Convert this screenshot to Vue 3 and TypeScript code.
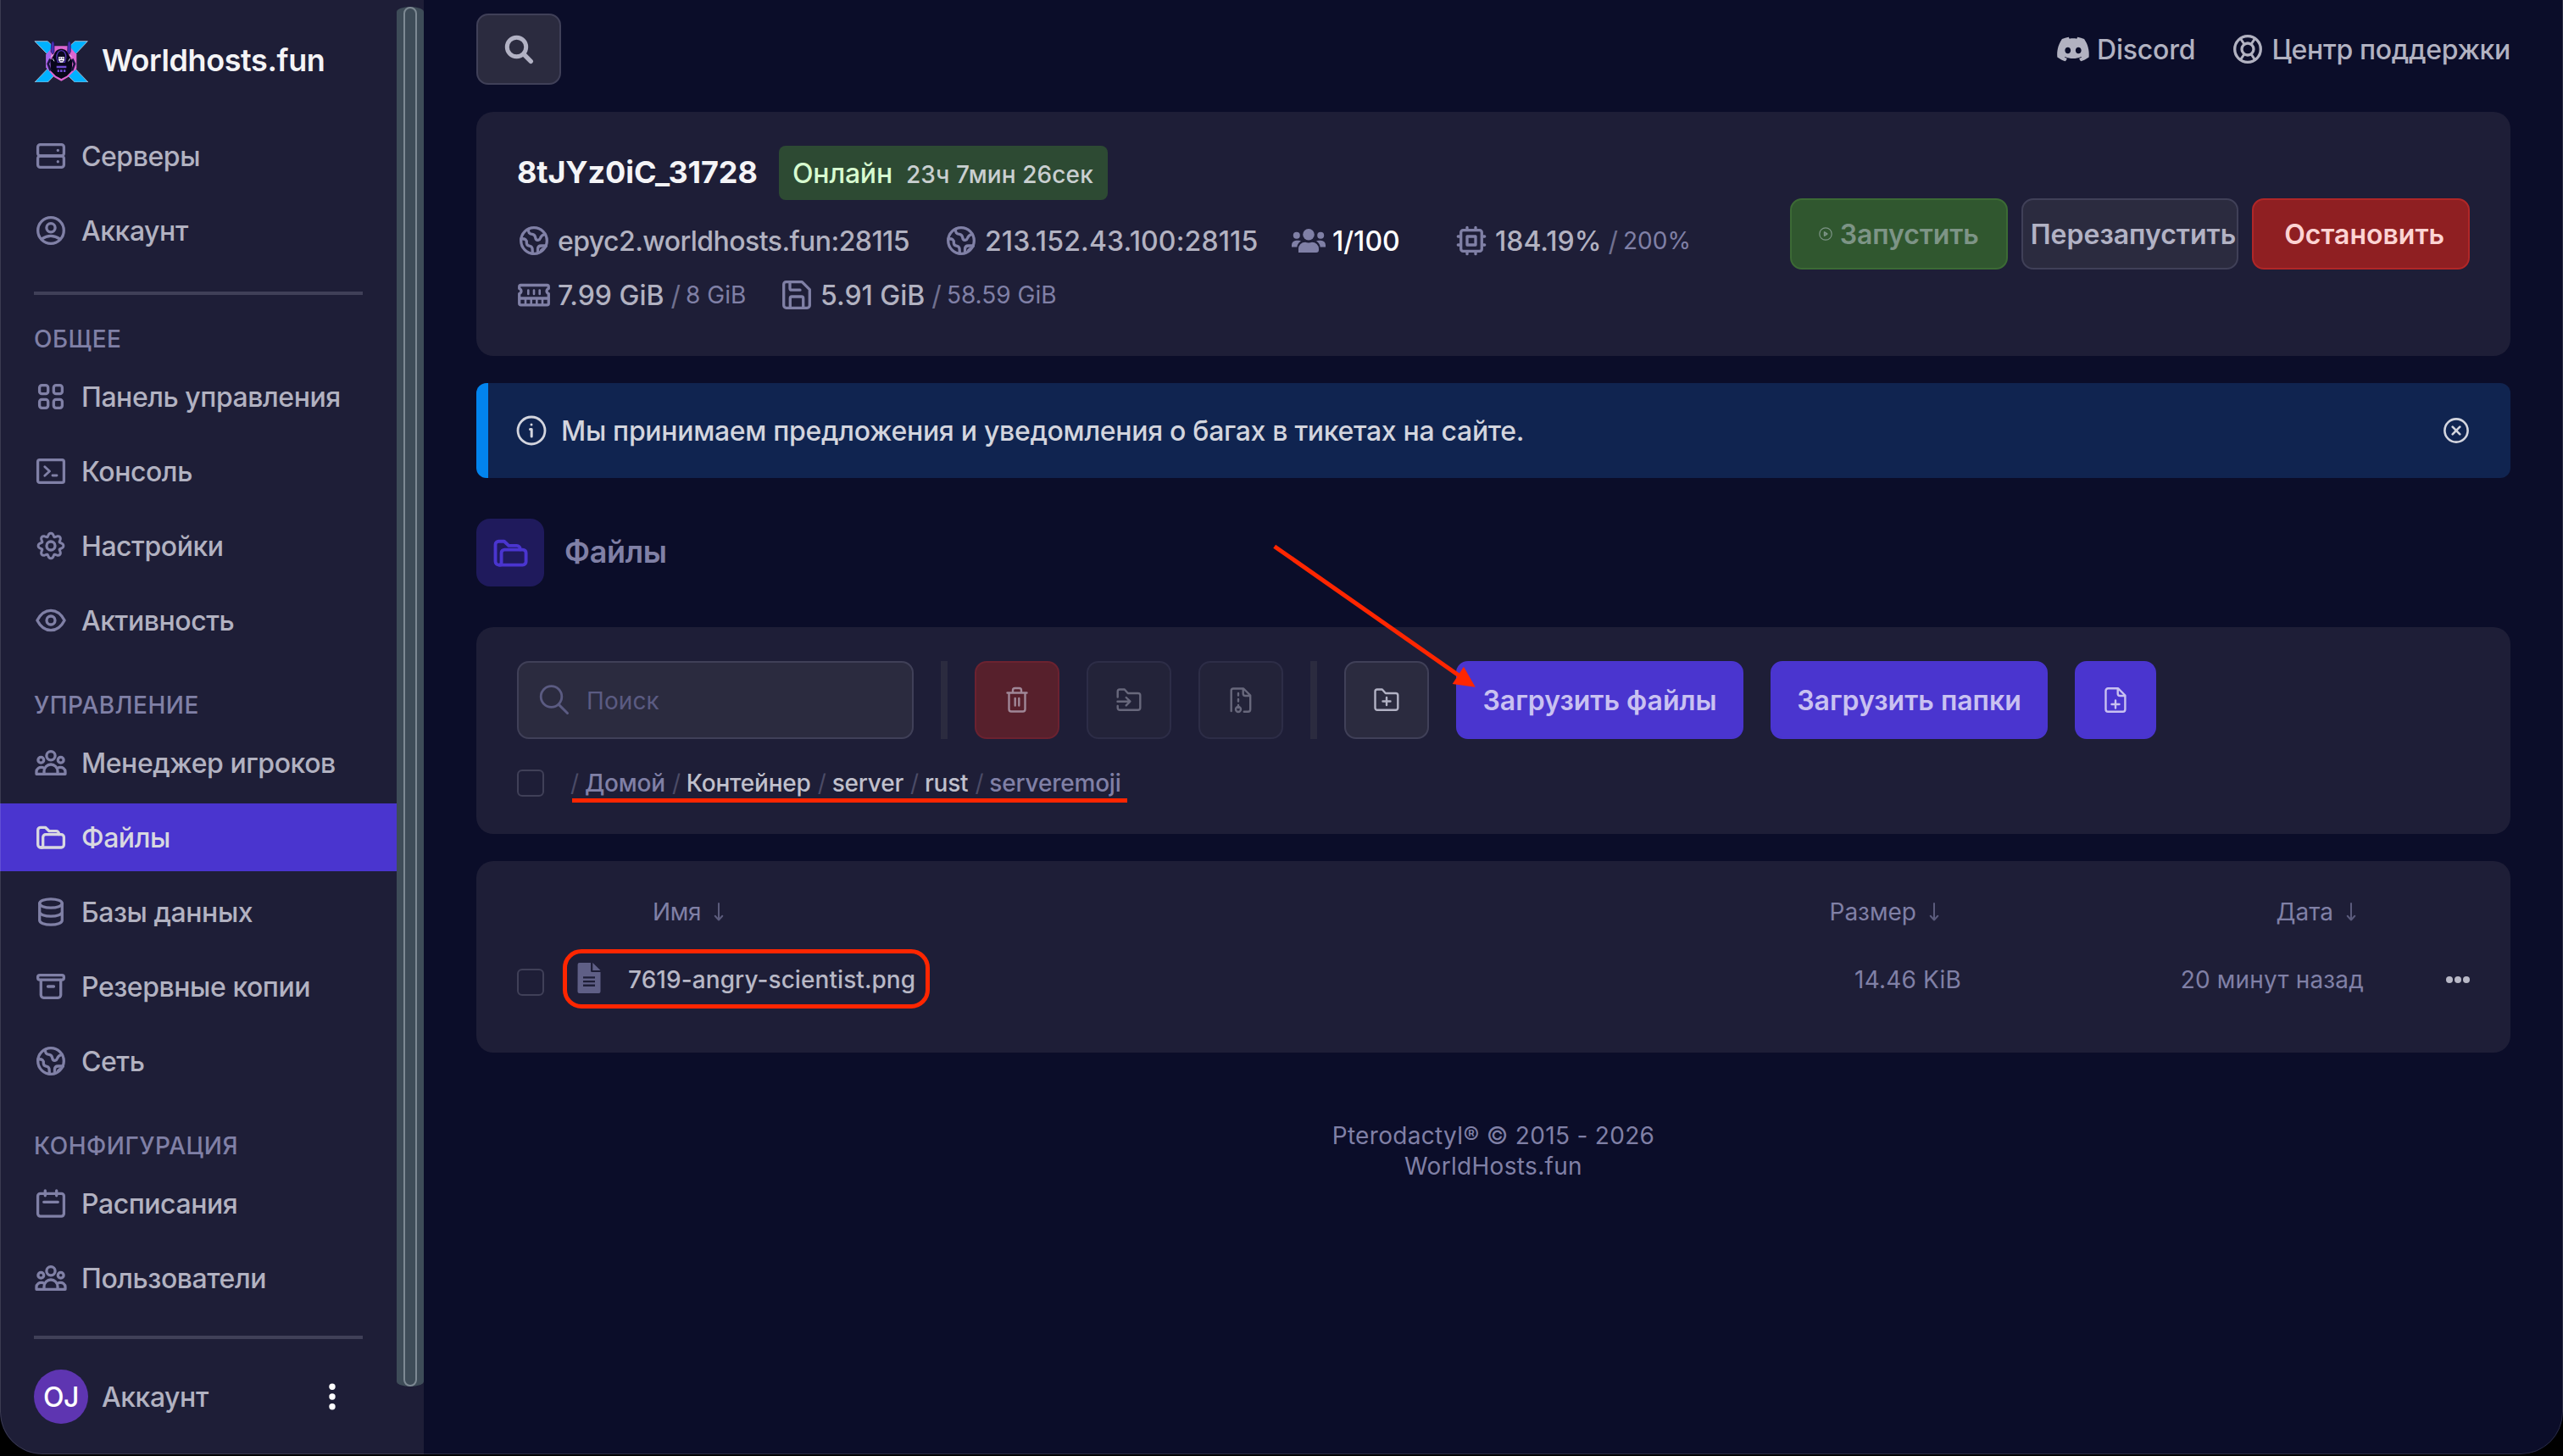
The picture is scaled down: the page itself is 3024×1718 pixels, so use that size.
<script setup lang="ts">
interface NavItem { label: string; icon: string; active?: boolean }
interface NavGroup { title?: string; items: NavItem[] }

const gearPath = (() => {
  const pts: string[] = []
  for (let i = 0; i < 160; i++) {
    const a = (i / 160) * Math.PI * 2
    const c = Math.cos(8 * a)
    const r = 13.2 + 1.9 * c - 0.25 * Math.cos(16 * a)
    pts.push(`${(20 + r * Math.sin(a)).toFixed(2)} ${(20 - r * Math.cos(a)).toFixed(2)}`)
  }
  return `M${pts.join('L')}Z`
})()

const icons: Record<string, string> = {
  server: '<rect x="4.6" y="6.6" width="30.8" height="13.4" rx="3"/><rect x="4.6" y="20" width="30.8" height="13.4" rx="3"/><path d="M28.3 13.3v.1M28.3 26.7v.1"/>',
  account: '<circle cx="20" cy="20" r="15.3"/><circle cx="20" cy="16.7" r="5.1"/><path d="M9 30.2Q19.8 22.500 31 30.2"/>',
  grid: '<rect x="6.6" y="6.6" width="10.1" height="10.1" rx="2.8"/><rect x="23.3" y="6.6" width="10.1" height="10.1" rx="2.8"/><rect x="6.6" y="23.3" width="10.1" height="10.1" rx="2.8"/><rect x="23.3" y="23.3" width="10.1" height="10.1" rx="2.8"/>',
  console: '<rect x="4.6" y="6.6" width="30.8" height="26.8" rx="2.2"/><path stroke-width="2.9" d="M12.8 14.8l5.700 5.2-5.700 5.2M22 25h5"/>',
  gear: `<path stroke-width="3" d="${gearPath}"/><circle cx="20" cy="20" r="5"/>`,
  eye: '<path d="M3.9 20C8 12 13.5 8.3 20 8.3S32 12 36.1 20C32 28 26.500 31.7 20 31.7S8 28 3.9 20z"/><circle cx="20" cy="20" r="5"/>',
  users: '<circle cx="20" cy="11.7" r="5.1"/><circle cx="8.3" cy="16.7" r="3.4"/><circle cx="31.7" cy="16.7" r="3.4"/><path d="M12 33.3v-3.3a8 8 0 0 1 16 0v3.3M10.7 25.7C6 24.5 3 27.5 3 30.5v2.8H37v-2.8C37 27.5 34 24.5 29.3 25.7"/>',
  folder: '<path d="M10 32H8.2a3.5 3.5 0 0 1-3.5-3.5V11.5a3.2 3.2 0 0 1 3.2-3.2h5.6l4.6 4.4h8.2a3.2 3.2 0 0 1 3.2 3.2v.6"/><path d="M8.5 32c1.5 0 2.2-1 2.2-2.5v-9.600a3.2 3.2 0 0 1 3.2-3.2h18.3a3.2 3.2 0 0 1 3.2 3.2v8.9a3.2 3.2 0 0 1-3.2 3.2H8.5z"/>',
  database: '<ellipse cx="20" cy="10" rx="13.3" ry="5.2"/><path d="M6.7 10v20c0 2.9 6 5.2 13.3 5.2s13.3-2.3 13.3-5.2V10M6.7 20c0 2.9 6 5.2 13.3 5.2S33.3 22.9 33.3 20"/>',
  archive: '<rect x="4.6" y="6.6" width="30.8" height="5.6" rx="2.4"/><path d="M8.3 12.5v17.6a3.2 3.2 0 0 0 3.2 3.2h17a3.2 3.2 0 0 0 3.2-3.2V12.5M16.5 20h7"/>',
  globe: '<circle cx="20" cy="20" r="15.3"/><path d="M13.5 6.5c-.4 3.8 1 5.6 4.5 5.8 4.5.2 3 4.5 4.5 6.2 1.5 1.6 4.2.8 5-1.5.6-2 1.5-3.5 5.2-4.5M5 17.8c5-.4 6.5 1.5 6.3 4.5-.2 2.8 1.7 3.7 3.9 4 2.8.5 3.1 2.2 3.1 8.7M34.500 26h-6c-3 0-4 1.5-4 4v4.5M28.5 31.5l2-1.8"/>',
  calendar: '<rect x="4.6" y="8.3" width="30.8" height="26.8" rx="3"/><path d="M13.3 4.8v6M26.7 4.8v6M11.7 18.3h16.6"/>',
  search: '<circle cx="17.5" cy="17.5" r="11.2" stroke-width="5"/><path stroke-width="5.4" d="M26 26l8.3 8.3"/>',
  searchThin: '<circle cx="16.5" cy="16" r="12.3" stroke-width="2.8"/><path stroke-width="3" d="M25.3 25.4L35.5 35.5"/>',
  discord: '<path transform="translate(1.2 1.2) scale(1.566)" fill="currentColor" stroke="none" d="M20.317 4.3698a19.7913 19.7913 0 00-4.8851-1.5152.0741.0741 0 00-.0785.0371c-.211.3753-.4447.8648-.6083 1.2495-1.8447-.2762-3.68-.2762-5.4868 0-.1636-.3933-.4058-.8742-.6177-1.2495a.077.077 0 00-.0785-.037 19.7363 19.7363 0 00-4.8852 1.515.0699.0699 0 00-.0321.0277C.5334 9.0458-.319 13.5799.0992 18.0578a.0824.0824 0 00.0312.0561c2.0528 1.5076 4.0413 2.4228 5.9929 3.0294a.0777.0777 0 00.0842-.0276c.4616-.6304.8731-1.2952 1.226-1.9942a.076.076 0 00-.0416-.1057c-.6528-.2476-1.2743-.5495-1.8722-.8923a.077.077 0 01-.0076-.1277c.1258-.0943.2517-.1923.3718-.2914a.0743.0743 0 01.0776-.0105c3.9278 1.7933 8.18 1.7933 12.0614 0a.0739.0739 0 01.0785.0095c.1202.099.246.1981.3728.2924a.077.077 0 01-.0066.1276 12.2986 12.2986 0 01-1.873.8914.0766.0766 0 00-.0407.1067c.3604.698.7719 1.3628 1.225 1.9932a.076.076 0 00.0842.0286c1.961-.6067 3.9495-1.5219 6.0023-3.0294a.077.077 0 00.0313-.0552c.5004-5.177-.8382-9.6739-3.5485-13.6604a.061.061 0 00-.0312-.0286zM8.02 15.3312c-1.1825 0-2.1569-1.0857-2.1569-2.419 0-1.3332.9555-2.4189 2.157-2.4189 1.2108 0 2.1757 1.0952 2.1568 2.419 0 1.3332-.9555 2.4189-2.1569 2.4189zm7.9748 0c-1.1825 0-2.1569-1.0857-2.1569-2.419 0-1.3332.9554-2.4189 2.1569-2.4189 1.2108 0 2.1757 1.0952 2.1568 2.419 0 1.3332-.946 2.4189-2.1568 2.4189Z"/>',
  lifebuoy: '<circle cx="20" cy="20" r="15.3"/><circle cx="20" cy="20" r="7"/><path d="M11.5 7.5l4 6M28.5 7.5l-4 6M11.5 32.5l4-6M28.5 32.5l-4-6" stroke-width="3"/>',
  usersSolid: '<g fill="currentColor" stroke="none"><circle cx="20" cy="12.8" r="6.8"/><circle cx="5.8" cy="13.8" r="4"/><circle cx="34.2" cy="13.8" r="4"/><path d="M0 27.5v-2.3A5.5 5.5 0 0 1 5.5 19.7h2.7c1 0 2 .3 2.8.8a9.5 9.5 0 0 0-4.700 7zM40 27.5v-2.3a5.5 5.5 0 0 0-5.5-5.5h-2.7c-1 0-2 .3-2.8.8a9.5 9.5 0 0 1 4.700 7zM8 34v-4.3A8 8 0 0 1 16 21.7c2.500 1 5.5 1 8 0a8 8 0 0 1 8 8V31a3 3 0 0 1-3 3z"/></g>',
  cpu: '<rect x="7.7" y="7.7" width="24.6" height="24.6" rx="2.6"/><rect x="15" y="15" width="10" height="10"/><path d="M15 7V4.3M25 7V4.3M15 33v2.7M25 33v2.7M7 15H4.3M7 25H4.3M33 15h2.7M33 25h2.7"/>',
  ram: '<path d="M4.5 8.5h31c1.3 0 1.8.8 1.8 2v2c-3 1-3 5 0 6v11.5c0 1.2-.6 1.8-1.8 1.8h-31c-1.2 0-1.8-.6-1.8-1.8V18.5c3-1 3-5 0-6v-2c0-1.2.5-2 1.8-2zM3 24h34"/><path stroke-width="2.6" d="M13.3 14.5v4.5M20 14.5v4.5M26.7 14.5v4.5M10 25v6M16.7 25v6M23.3 25v6M30 25v6"/>',
  floppy: '<path d="M7.5 4.700h18.8l9 9v18.6a3 3 0 0 1-3 3H7.7a3 3 0 0 1-3-3V7.5a2.8 2.8 0 0 1 2.8-2.8z"/><path d="M12 5v7.2a2 2 0 0 0 2 2h10M12.3 35V24a2 2 0 0 1 2-2h11.4a2 2 0 0 1 2 2v11"/>',
  play: '<circle cx="20" cy="20" r="18" stroke-width="3"/><path stroke-width="4" d="M16.5 14.5v11l8-5.5z"/>',
  info: '<circle cx="20" cy="20" r="16" stroke-width="2.8"/><path stroke-width="3" d="M18.5 18.5h1.7v8.5M20 13v.1"/>',
  close: '<circle cx="20" cy="20" r="13.6" stroke-width="2.6"/><path stroke-width="2.6" d="M15.7 15.7l8.6 8.6M24.3 15.7l-8.6 8.6"/>',
  trash: '<path stroke-width="2.4" d="M8.5 11.5h23M10.5 11.5v19.3a2.700 2.700 0 0 0 2.700 2.700h13.6a2.700 2.700 0 0 0 2.700-2.700V11.5M15 11V8.5A2.5 2.5 0 0 1 17.5 6h5A2.5 2.5 0 0 1 25 8.5V11M17.7 18v8.5M22.3 18v8.5"/>',
  move: '<path stroke-width="2.4" d="M6.7 16.5V10a2.5 2.5 0 0 1 2.5-2.5h5.6l4 4.5h12a2.5 2.5 0 0 1 2.5 2.5v14.8a2.5 2.5 0 0 1-2.5 2.5H9.2a2.5 2.5 0 0 1-2.5-2.5V27M6.5 21.7h14.7M16.7 17l4.7 4.7-4.7 4.7"/>',
  zip: '<path stroke-width="2.4" d="M8.7 33V9a2.5 2.5 0 0 1 2.5-2.5h12l8 8V31a2.7 2.7 0 0 1-2.7 2.7h-4.7M22.7 7v5.5a2.5 2.5 0 0 0 2.5 2.5H31M17 12v2.5M17 19v2.5M17 26v3"/><circle cx="17" cy="31" r="3" stroke-width="2.4"/>',
  folderPlus: '<path stroke-width="2.4" d="M6.5 10A2.5 2.5 0 0 1 9 7.5h5.8l4 4.5h12a2.5 2.5 0 0 1 2.5 2.5v14.8a2.5 2.5 0 0 1-2.5 2.5H9a2.5 2.5 0 0 1-2.5-2.5zM20 17v9M15.5 21.5h9"/>',
  filePlus: '<path stroke-width="2.4" d="M8.5 9A2.7 2.7 0 0 1 11.2 6.3h12l8.2 8.2V31a2.7 2.7 0 0 1-2.7 2.7H11.2A2.7 2.7 0 0 1 8.5 31zM22.7 7v5.5a2.5 2.5 0 0 0 2.5 2.5H31M20 20.5v9M15.5 25h9"/>',
  arrow: '<path stroke-width="2" d="M20 10v19.5M15.7 24.8l4.3 4.7 4.3-4.7"/>',
  file: '<path fill="currentColor" stroke="none" fill-rule="evenodd" d="M6.6 4a2 2 0 0 1 2-2H22v9.5a1.5 1.5 0 0 0 1.5 1.5h10V36a2 2 0 0 1-2 2h-23a2 2 0 0 1-2-2zM13 18.2v2.4h14v-2.4zM13 22.9v2.4h14v-2.4zM13 27.6v2.4h14v-2.4zM24.3 2l9.2 9h-9.2z"/>',
}

const groups: NavGroup[] = [
  { items: [{ label: 'Серверы', icon: 'server' }, { label: 'Аккаунт', icon: 'account' }] },
  {
    title: 'ОБЩЕЕ',
    items: [
      { label: 'Панель управления', icon: 'grid' },
      { label: 'Консоль', icon: 'console' },
      { label: 'Настройки', icon: 'gear' },
      { label: 'Активность', icon: 'eye' },
    ],
  },
  {
    title: 'УПРАВЛЕНИЕ',
    items: [
      { label: 'Менеджер игроков', icon: 'users' },
      { label: 'Файлы', icon: 'folder', active: true },
      { label: 'Базы данных', icon: 'database' },
      { label: 'Резервные копии', icon: 'archive' },
      { label: 'Сеть', icon: 'globe' },
    ],
  },
  {
    title: 'КОНФИГУРАЦИЯ',
    items: [{ label: 'Расписания', icon: 'calendar' }, { label: 'Пользователи', icon: 'users' }],
  },
]

const crumbs = [
  { label: 'Домой', link: false },
  { label: 'Контейнер', link: true },
  { label: 'server', link: true },
  { label: 'rust', link: true },
  { label: 'serveremoji', link: false },
]
</script>

<template>
  <div class="screen">
    <div class="window">
      <aside class="sidebar">
        <div class="side-body">
          <div class="brand">
            <svg class="logo" viewBox="120 140 192 152">
              <path d="M123 145h46l46 46 50-46h45l-68 72 70 73h-47l-50-48-46 48h-46l70-73z" fill="#00b2ff" stroke="#9fb4cc" stroke-width="3" />
              <path d="M190 162h55l26 30v50l-30 30-24 14-25-14-29-34v-46z" fill="#dc66d0" />
              <path d="M163 192l17-16v78l-17-16z" fill="#a565ee" />
              <path d="M192 190c8-24 42-24 50 0l14 26-2 34-18 18-19 10-19-10-18-18-2-34z" fill="#07061a" />
              <path d="M182 152l5-9 5 9v30l-5 10-7-10zM240 152l5-9 5 9v30l-5 10-6-10z" fill="#4b2fb4" stroke="#1c1250" stroke-width="2" />
              <path d="M201 205c-4-36 36-36 32 0l-4 14h-24z" fill="#0a0820" stroke="#5234b4" stroke-width="4" />
              <path d="M207 200h21v12l-6 8h-9l-6-8z" fill="#f0ecf8" />
              <path d="M209 205h7M219 205h7M213 214h9" stroke="#1b1230" stroke-width="2.500" />
              <path d="M200 236h35M203 250h7M213 250h8M225 250h7" stroke="#6f4bd2" stroke-width="8" />
              <path d="M178 208l-8 17 9 24M256 208l8 17-9 24" fill="none" stroke="#1d1440" stroke-width="8" />
              <path d="M186 206l6 10M248 206l-6 10M188 192l-8 9M246 192l8 9" stroke="#d9d2ec" stroke-width="3" />
            </svg>
            <span class="brand-name">Worldhosts.fun</span>
          </div>
          <nav>
            <section v-for="(group, gi) in groups" :key="gi" class="group">
              <h6 v-if="group.title" class="group-title">{{ group.title }}</h6>
              <a v-for="item in group.items" :key="item.label" class="nav-item" :class="{ active: item.active }">
                <svg class="ic" viewBox="0 0 40 40" v-html="icons[item.icon]" />
                <span>{{ item.label }}</span>
              </a>
              <div v-if="gi === 0" class="divider" />
            </section>
          </nav>
          <div class="divider bottom" />
          <div class="user">
            <div class="avatar">OJ</div>
            <span class="user-name">Аккаунт</span>
            <svg class="kebab" viewBox="0 0 8 32"><circle cx="4" cy="4.3" r="3.7" /><circle cx="4" cy="16" r="3.7" /><circle cx="4" cy="27.7" r="3.7" /></svg>
          </div>
        </div>
        <div class="scroll-track"><div class="scroll-thumb" /></div>
      </aside>

      <main class="main">
        <header class="topbar">
          <button class="btn search-btn"><svg class="ic" viewBox="0 0 40 40" v-html="icons.search" /></button>
          <a class="top-link discord"><svg class="ic" viewBox="0 0 40 40" v-html="icons.discord" /><span>Discord</span></a>
          <a class="top-link support"><svg class="ic" viewBox="0 0 40 40" v-html="icons.lifebuoy" /><span>Центр поддержки</span></a>
        </header>

        <section class="card server">
          <div class="server-info">
            <div class="server-head">
              <h1>8tJYz0iC_31728</h1>
              <div class="badge"><span class="state">Онлайн</span><span class="uptime">23ч 7мин 26сек</span></div>
            </div>
            <div class="stats first">
              <div class="stat"><svg class="ic" viewBox="0 0 40 40" v-html="icons.globe" /><span class="host">epyc2.worldhosts.fun:28115</span></div>
              <div class="stat"><svg class="ic" viewBox="0 0 40 40" v-html="icons.globe" /><span class="ip">213.152.43.100:28115</span></div>
              <div class="stat"><svg class="ic" viewBox="0 0 40 40" v-html="icons.usersSolid" /><span class="players">1/100</span></div>
              <div class="stat"><svg class="ic" viewBox="0 0 40 40" v-html="icons.cpu" /><span>184.19%</span><i>/</i><small>200%</small></div>
            </div>
            <div class="stats second">
              <div class="stat"><svg class="ic" viewBox="0 0 40 40" v-html="icons.ram" /><span>7.99 GiB</span><i>/</i><small>8 GiB</small></div>
              <div class="stat"><svg class="ic" viewBox="0 0 40 40" v-html="icons.floppy" /><span>5.91 GiB</span><i>/</i><small>58.59 GiB</small></div>
            </div>
          </div>
          <div class="power">
            <button class="btn start"><svg class="ic" viewBox="0 0 40 40" v-html="icons.play" /><span>Запустить</span></button>
            <button class="btn restart"><span>Перезапустить</span></button>
            <button class="btn stop"><span>Остановить</span></button>
          </div>
        </section>

        <section class="alert">
          <svg class="ic" viewBox="0 0 40 40" v-html="icons.info" />
          <p>Мы принимаем предложения и уведомления о багах в тикетах на сайте.</p>
          <svg class="ic close" viewBox="0 0 40 40" v-html="icons.close" />
        </section>

        <div class="page-title">
          <div class="title-icon"><svg class="ic" viewBox="0 0 40 40" v-html="icons.folder" /></div>
          <h2>Файлы</h2>
        </div>

        <section class="card tools">
          <div class="toolbar">
            <div class="search-field"><svg class="ic" viewBox="0 0 40 40" v-html="icons.searchThin" /><span>Поиск</span></div>
            <div class="sep" />
            <button class="btn sq trash"><svg class="ic" viewBox="0 0 40 40" v-html="icons.trash" /></button>
            <button class="btn sq dim"><svg class="ic" viewBox="0 0 40 40" v-html="icons.move" /></button>
            <button class="btn sq dim"><svg class="ic" viewBox="0 0 40 40" v-html="icons.zip" /></button>
            <div class="sep" />
            <button class="btn sq"><svg class="ic" viewBox="0 0 40 40" v-html="icons.folderPlus" /></button>
            <button class="btn primary up-files"><span>Загрузить файлы</span></button>
            <button class="btn primary up-dirs"><span>Загрузить папки</span></button>
            <button class="btn primary new-file"><svg class="ic" viewBox="0 0 40 40" v-html="icons.filePlus" /></button>
          </div>
          <div class="path-row">
            <div class="checkbox" />
            <div class="crumbs">
              <template v-for="c in crumbs" :key="c.label"><i>/</i><span :class="{ link: c.link }">{{ c.label }}</span></template>
              <div class="underline" />
            </div>
          </div>
        </section>

        <section class="card files">
          <div class="row head">
            <span />
            <span class="h-name">Имя<svg class="ic" viewBox="0 0 40 40" v-html="icons.arrow" /></span>
            <span class="h-size">Размер<svg class="ic" viewBox="0 0 40 40" v-html="icons.arrow" /></span>
            <span class="h-date">Дата<svg class="ic" viewBox="0 0 40 40" v-html="icons.arrow" /></span>
            <span />
          </div>
          <div class="row item">
            <div class="checkbox" />
            <div class="name">
              <svg class="ic" viewBox="0 0 40 40" v-html="icons.file" />
              <span>7619-angry-scientist.png</span>
              <div class="mark" />
            </div>
            <span class="cell">14.46 KiB</span>
            <span class="cell date">20 минут назад</span>
            <svg class="more" viewBox="0 0 28 8"><circle cx="4" cy="4" r="4" /><circle cx="14" cy="4" r="4" /><circle cx="24" cy="4" r="4" /></svg>
          </div>
        </section>

        <footer><div class="f1">Pterodactyl® © 2015 - 2026</div><div class="f2">WorldHosts.fun</div></footer>
      </main>

      <svg class="pointer" viewBox="0 0 240 170">
        <path d="M1.7 2.7L220 155.5" stroke="#ff2600" stroke-width="5" fill="none" />
        <path d="M238.7 168.7L225 144.7 211.7 165z" fill="#ff2600" />
      </svg>
    </div>
  </div>
</template>

<style>
body { margin: 0; background: #000; }
</style>

<style scoped>
* { box-sizing: border-box; }
h1, h2, h6, p { margin: 0; }
.screen {
  width: 3024px; height: 1718px; overflow: hidden; background: #000;
  font-family: Inter, "Liberation Sans", sans-serif; font-size: 32px; color: #b2b2c1;
}
.window {
  position: relative; display: flex; width: 3024px; height: 1716px; overflow: hidden;
  background: #0b0d29; border-radius: 0 0 50px 50px;
}
.window::after {
  content: ""; position: absolute; inset: -1px 0 0 0; pointer-events: none;
  border: 1px solid rgba(255, 255, 255, 0.13); border-radius: 0 0 50px 50px;
}
.ic {
  width: 40px; height: 40px; flex: none; display: block;
  fill: none; stroke: currentColor; stroke-width: 3.3; stroke-linecap: round; stroke-linejoin: round;
}
.btn {
  display: flex; align-items: center; justify-content: center; padding: 0;
  font-family: inherit; font-size: 32px; font-weight: 600; white-space: nowrap;
  color: #b2b2c4; background: #2b2b3f; border: 2px solid #404058; border-radius: 14px;
}

/* sidebar */
.sidebar { display: flex; width: 500px; height: 1716px; flex: none; background: #1e1e37; }
.side-body { width: 468px; }
.brand { display: flex; align-items: center; height: 144px; padding: 0 0 0 40px; }
.logo { width: 64px; height: 50.7px; }
.brand-name { margin: -3px 0 0 16px; font-size: 36px; font-weight: 600; color: #f4f4f6; letter-spacing: -0.4px; }
.nav-item { display: flex; align-items: center; height: 80px; margin-bottom: 8px; padding-left: 40px; font-weight: 500; letter-spacing: -0.45px; }
.nav-item .ic { color: #8080a6; margin-right: 16px; }
.nav-item.active { background: #4a35cf; color: #d8d8e0; }
.nav-item.active .ic { color: #d8d8e0; }
.group-title {
  display: flex; align-items: center; height: 40px; margin: 40px 0 8px; padding-left: 40px;
  font-size: 28px; font-weight: 500; color: #8080a6; letter-spacing: 0.5px;
}
.divider { width: 388px; height: 4px; margin: 32px 0 0 40px; background: #404058; }
.divider.bottom { margin-top: 28px; }
.group:first-child { height: 196px; }
.user { display: flex; align-items: center; height: 64px; margin-top: 36px; padding-left: 40px; }
.avatar {
  display: flex; align-items: center; justify-content: center; width: 64px; height: 64px;
  border-radius: 50%; background: #5e35b1; color: #fff; font-weight: 500; letter-spacing: -0.5px;
}
.user-name { width: 268px; margin-left: 16px; font-weight: 500; letter-spacing: -0.45px; }
.kebab { width: 8px; height: 32px; fill: #fff; }
.scroll-track { width: 32px; height: 1628px; margin-top: 8px; padding: 0 8px; background: #3e4c58; border-radius: 16px / 6px; }
.scroll-thumb { height: 1628px; border: 2px solid #7d8993; border-radius: 8px; }

/* main */
.main { width: 2400px; margin-left: 62px; }
.topbar { display: flex; align-items: center; height: 84px; margin-top: 16px; }
.search-btn { width: 100px; height: 84px; }
.top-link { display: flex; align-items: center; font-weight: 500; }
.discord { margin-left: auto; letter-spacing: -0.2px; }
.top-link .ic { margin-right: 8px; }
.support { margin-left: 42px; letter-spacing: -0.33px; }
.card { background: #1e1e37; border-radius: 20px; }
.server { display: flex; height: 288px; margin-top: 32px; padding: 0 48px; justify-content: space-between; align-items: center; }
.server-info { height: 288px; padding-top: 40px; }
.server-head { display: flex; align-items: center; height: 64px; }
.server-head h1 { width: 309px; margin-top: -2px; white-space: nowrap; font-size: 36px; font-weight: 700; color: #f4f4f6; letter-spacing: -0.1px; }
.badge { display: flex; align-items: baseline; width: 388px; height: 64px; padding: 13px 0 0 16px; border-radius: 8px; background: #2d4a33; }
.state { width: 134px; color: #d7fbd0; font-weight: 500; letter-spacing: -0.2px; }
.uptime { font-size: 28px; font-weight: 500; color: #c9cfd0; white-space: nowrap; letter-spacing: 0.1px; }
.stats { display: grid; align-items: center; height: 40px; }
.stats.first { grid-template-columns: 504px 410px 192px auto; margin-top: 28px; }
.stats.second { grid-template-columns: 310px auto; margin-top: 24px; }
.stat { display: flex; align-items: center; white-space: nowrap; font-weight: 500; }
.stat .ic { color: #8080a6; margin-right: 8px; }
.stat small { font-size: 28px; color: #8080a6; font-weight: 400; }
.stat i { font-style: normal; font-weight: 400; margin: 0 6px 0 8px; color: #70708f; }
.host { letter-spacing: -0.56px; }
.ip { letter-spacing: 0.15px; }
.players { color: #fff; }
.power { display: grid; grid-template-columns: repeat(3, 1fr); gap: 16px; width: 802px; }
.power .btn { height: 84px; }
.power .restart, .power .stop { padding-left: 8px; }
.start { background: #30572f; border-color: #3c6a35; color: #7d9486; letter-spacing: -0.1px; }
.start .ic { width: 16px; height: 16px; margin-right: 9px; }
.stop { background: #8f1f22; border-color: #b02728; color: #fcd3d3; }
.alert { display: flex; align-items: center; height: 112px; margin-top: 32px; padding: 0 44px 0 31px; border-left: 14px solid #0284ee; border-radius: 12px; background: #102450; color: #d3d5de; }
.alert p { margin-left: 15px; font-weight: 500; flex: 1; white-space: nowrap; letter-spacing: -0.31px; }
.page-title { display: flex; align-items: center; height: 80px; margin-top: 48px; }
.title-icon { display: flex; align-items: center; justify-content: center; width: 80px; height: 80px; border-radius: 16px; background: #1f1a5c; color: #4a35cf; }
.title-icon .ic { width: 47px; height: 47px; }
.page-title h2 { margin: -2px 0 0 24px; font-size: 36px; font-weight: 600; color: #8080a6; letter-spacing: -0.35px; }
.tools { height: 244px; margin-top: 48px; padding: 40px 48px; }
.toolbar { display: flex; gap: 32px; height: 92px; }
.toolbar .btn { flex: none; }
.search-field { display: flex; align-items: center; width: 468px; padding-left: 22px; background: #2b2b3f; border: 2px solid #404058; border-radius: 14px; color: #5b5b82; font-size: 28px; }
.search-field .ic { margin-right: 18px; }
.search-field span { margin-top: 2px; letter-spacing: 0.1px; }
.sep { width: 8px; background: #2b2b3f; }
.sq { width: 100px; }
.dim { background: #232339; border-color: #2d2d47; color: #68687c; }
.trash { background: #57202c; border-color: #6b2230; color: #a08797; }
.primary { background: #4a35cf; border-color: #4a35cf; color: #c9c1f1; }
.up-files { width: 339px; }
.up-dirs { width: 327px; }
.new-file { width: 96px; }
.path-row { display: flex; align-items: center; height: 32px; margin-top: 36px; }
.checkbox { width: 32px; height: 32px; border: 2px solid #404058; border-radius: 6px; }
.crumbs { position: relative; display: flex; align-items: center; margin-left: 31px; font-size: 28px; font-weight: 500; color: #8080a6; letter-spacing: -0.2px; }
.crumbs i { font-style: normal; color: #4b4b66; margin-right: 7px; font-weight: 400; }
.crumbs span { margin-right: 8px; }
.crumbs .link { color: #c0c0cc; }
.underline { position: absolute; left: 2px; top: 35px; width: 655px; height: 5px; background: #ff2600; }
.files { height: 226px; margin-top: 32px; padding: 40px 48px 0; font-size: 28px; color: #8080a6; }
.row { display: grid; grid-template-columns: 72px 1fr 472px 475px 125px; align-items: center; height: 40px; }
.head span { display: flex; align-items: center; }
.head .ic { color: #5b5b7c; margin: 0 -14px 0 1px; }
.h-name { padding-left: 88px; letter-spacing: -0.3px; }
.h-size { justify-content: flex-end; padding-right: 26px; }
.h-date { justify-content: flex-end; padding-right: 9px; }
.item { margin-top: 40px; }
.item .checkbox { margin-top: 6px; }
.name { position: relative; display: flex; align-items: center; color: #b8b8c6; font-weight: 500; letter-spacing: 0.07px; }
.name .ic { width: 40px; height: 40px; margin: -4px 26px 0 -7px; color: #5f5f86; }
.name .mark { position: absolute; left: -18px; top: -18px; width: 433px; height: 70px; border: 5px solid #ff2600; border-radius: 22px; }
.cell { text-align: right; letter-spacing: 0.18px; }
.more { justify-self: end; width: 28px; height: 8px; fill: #b8b8c6; }
footer { margin-top: 80px; text-align: center; font-size: 28px; line-height: 36px; color: #8080a6; letter-spacing: 0.32px; }
.pointer { position: absolute; left: 1502px; top: 642px; width: 240px; height: 170px; }
</style>
